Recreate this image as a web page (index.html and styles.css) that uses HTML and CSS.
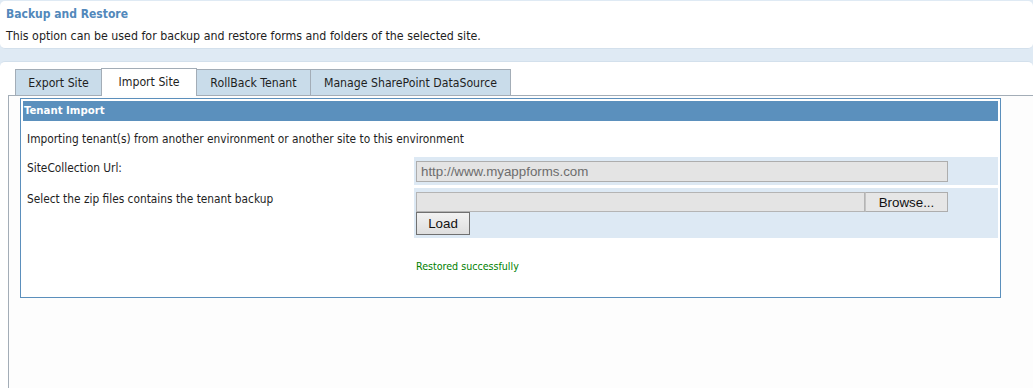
FILE: index.html
```html
<!DOCTYPE html>
<html>
<head>
<meta charset="utf-8">
<title>Backup and Restore</title>
<link rel="stylesheet" href="styles.css">
</head>
<body>
<div class="page">
  <div class="intro-card">
    <div class="page-title">Backup and Restore</div>
    <div class="page-desc">This option can be used for backup and restore forms and folders of the selected site.</div>
  </div>
  <div class="main">
    <div class="tabs">
      <div class="tab tab-export">Export Site</div>
      <div class="tab tab-import active">Import Site</div>
      <div class="tab tab-rollback">RollBack Tenant</div>
      <div class="tab tab-manage">Manage SharePoint DataSource</div>
    </div>
    <div class="tab-body">
      <div class="panel">
        <div class="panel-head">Tenant Import</div>
        <div class="panel-intro">Importing tenant(s) from another environment or another site to this environment</div>
        <div class="label">SiteCollection Url:</div>
        <div class="field">
          <input class="url-input" type="text" value="http://www.myappforms.com" readonly>
        </div>
        <div class="label">Select the zip files contains the tenant backup</div>
        <div class="field field-file">
          <div class="file-input"><span class="file-path"></span><span class="browse-btn">Browse...</span></div>
          <button class="load-btn" type="button">Load</button>
        </div>
        <div class="status-spacer"></div>
        <div class="status">Restored successfully</div>
      </div>
    </div>
  </div>
</div>
</body>
</html>
```

FILE: styles.css
```css
html, body {
  margin: 0;
  padding: 0;
}
body {
  background: #dfeaf4;
  font-family: "DejaVu Sans Condensed", "DejaVu Sans", sans-serif;
  font-size: 11.8px;
  color: #1e1e1e;
  height: 388px;
  overflow: hidden;
}
.page {
  display: flex;
  flex-direction: column;
  height: 388px;
  padding-top: 1px;
  box-sizing: border-box;
}
.intro-card {
  background: #fff;
  height: 48px;
  box-sizing: border-box;
  padding: 5px 6px 0;
  border-radius: 5px;
  border-bottom: 1px solid #d3e0ec;
}
.page-title {
  font-weight: bold;
  font-size: 12px;
  color: #5288bb;
  line-height: 16px;
}
.page-desc {
  margin-top: 6px;
  font-size: 12.3px;
  line-height: 16px;
}
.main {
  margin-top: 12px;
  flex: 1;
  background: #fff;
  border-radius: 5px 5px 0 0;
  border-top: 1px solid #d3e0ec;
  padding-top: 6px;
  display: flex;
  flex-direction: column;
}
.tabs {
  display: flex;
  align-items: flex-end;
  margin-left: 8px;
  padding-left: 7px;
  border-bottom: 1px solid #a3adb7;
}
.tab {
  height: 26px;
  box-sizing: border-box;
  border: 1px solid #a3adb7;
  border-bottom: none;
  background: #c9dcea;
  display: flex;
  align-items: center;
  justify-content: center;
  margin-left: -1px;
  font-size: 12.2px;
  color: #1e1e1e;
}
.tab:first-child {
  margin-left: 0;
}
.tab.active {
  height: 28px;
  background: #fff;
  margin-bottom: -1px;
  padding-bottom: 2px;
}
.tab-export { width: 87px; }
.tab-import { width: 96px; }
.tab-rollback { width: 115px; }
.tab-manage { width: 201px; }
.tab-body {
  flex: 1;
  margin-left: 8px;
  border-left: 1px solid #a3adb7;
  background: #fdfdfd;
}
.panel {
  margin: 2px 0 0 11px;
  width: 981px;
  box-sizing: border-box;
  border: 1px solid #5b8fbc;
  padding: 2px;
  background: #fff;
  display: grid;
  grid-template-columns: 388px 584px;
  grid-template-rows: 20px 30px 28px 50px 54px;
  column-gap: 3px;
  row-gap: 3px;
}
.panel-head {
  grid-column: 1 / -1;
  background: #5b90bd;
  color: #fff;
  font-weight: bold;
  font-size: 11.3px;
  line-height: 20px;
  padding-left: 1px;
}
.panel-intro {
  grid-column: 1 / -1;
  padding: 9px 4px 0;
  line-height: 13px;
}
.label {
  padding: 5px 4px 0;
  line-height: 13px;
}
.field {
  background: #dde9f4;
  padding: 4px 2px 0;
}
.url-input {
  display: block;
  width: 532px;
  height: 21px;
  box-sizing: border-box;
  margin: 0;
  border: 1px solid #adadad;
  background: #e4e4e4;
  padding: 0 4px;
  font-family: "Liberation Sans", Arial, sans-serif;
  font-size: 13.33px;
  color: #6d6d6d;
  outline: none;
}
.file-input {
  display: flex;
  width: 532px;
  height: 20px;
}
.file-path {
  flex: 1;
  border: 1px solid #b4b4b4;
  background: #e4e4e4;
}
.browse-btn {
  width: 83px;
  box-sizing: border-box;
  border: 1px solid #adadad;
  border-left-color: #c4c4c4;
  background: #e6e6e6;
  font-family: "Liberation Sans", Arial, sans-serif;
  font-size: 13.33px;
  color: #111;
  display: flex;
  align-items: center;
  justify-content: center;
}
.load-btn {
  display: block;
  width: 54px;
  height: 23px;
  margin: 0;
  padding: 0;
  border: 1px solid #707070;
  border-radius: 0;
  background: linear-gradient(#f2f2f2, #dedede);
  font-family: "Liberation Sans", Arial, sans-serif;
  font-size: 13.33px;
  color: #111;
}
.status {
  padding: 19px 2px 0;
  font-size: 10.6px;
  line-height: 13px;
  color: #008000;
}
```
